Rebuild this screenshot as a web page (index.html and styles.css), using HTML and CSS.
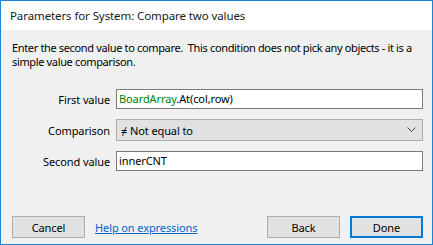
FILE: index.html
```html
<!DOCTYPE html>
<html lang="en">
<head>
    <meta charset="UTF-8">
    <title>Parameters for System: Compare two values</title>
    <link rel="stylesheet" href="styles.css">
</head>
<body>
    <div class="window">
        <div class="titlebar">Parameters for System: Compare two values</div>

        <div class="content">
            <p class="description">Enter the second value to compare.&nbsp; This condition does not pick any objects - it is a<br>simple value comparison.</p>

            <div class="form">
                <label class="label">First value</label>
                <div class="field"><span class="obj">BoardArray</span>.At(col,row)</div>

                <label class="label">Comparison</label>
                <div class="select">
                    <span>&ne; Not equal to</span>
                    <svg width="9" height="6" viewBox="0 0 9 6"><path d="M0.5 0.5 L4.5 4.5 L8.5 0.5" fill="none" stroke="#404040" stroke-width="1"/></svg>
                </div>

                <label class="label">Second value</label>
                <div class="field">innerCNT</div>
            </div>

            <div class="buttons">
                <button class="btn">Cancel</button>
                <a class="help" href="#">Help on expressions</a>
                <div class="spacer"></div>
                <button class="btn">Back</button>
                <button class="btn btn-default">Done</button>
            </div>
        </div>
    </div>
</body>
</html>
```

FILE: styles.css
```css
* {
    margin: 0;
    padding: 0;
    box-sizing: border-box;
}

body {
    font-family: 'Noto Sans', 'Open Sans', sans-serif;
    font-size: 11px;
    letter-spacing: -0.1px;
    color: #000;
    background-color: #fff;
}

.window {
    width: 433px;
    height: 245px;
    border: 1px solid #1883d7;
    display: flex;
    flex-direction: column;
}

.titlebar {
    height: 29px;
    background-color: #fff;
    padding-left: 9px;
    line-height: 30px;
    font-size: 11.5px;
    color: #1a1a1a;
}

.content {
    flex: 1;
    background-color: #f0f0f0;
    padding: 11px 9px 6px 11px;
    display: flex;
    flex-direction: column;
}

.description {
    line-height: 14px;
    letter-spacing: -0.35px;
    white-space: nowrap;
}

.form {
    margin-top: 20px;
    display: grid;
    grid-template-columns: 98px 307px;
    column-gap: 6px;
    row-gap: 10px;
    align-items: center;
}

.label {
    text-align: right;
}

.field {
    height: 20px;
    border: 1px solid #7a7a7a;
    background-color: #fff;
    padding: 0 2px;
    line-height: 18px;
}

.obj {
    color: #008000;
}

.select {
    height: 22px;
    border: 1px solid #adadad;
    background-color: #e1e1e1;
    padding: 0 6px 0 4px;
    display: flex;
    align-items: center;
    justify-content: space-between;
}

.buttons {
    margin-top: auto;
    display: flex;
    align-items: center;
}

.btn {
    width: 73px;
    height: 22px;
    font-family: inherit;
    font-size: 11px;
    letter-spacing: -0.1px;
    background-color: #e1e1e1;
    border: 1px solid #adadad;
    color: #000;
}

.btn-default {
    border: 2px solid #0078d7;
    margin-left: 10px;
}

.help {
    margin-left: 10px;
    color: #0066cc;
    text-decoration: underline;
}

.spacer {
    flex: 1;
}
```
